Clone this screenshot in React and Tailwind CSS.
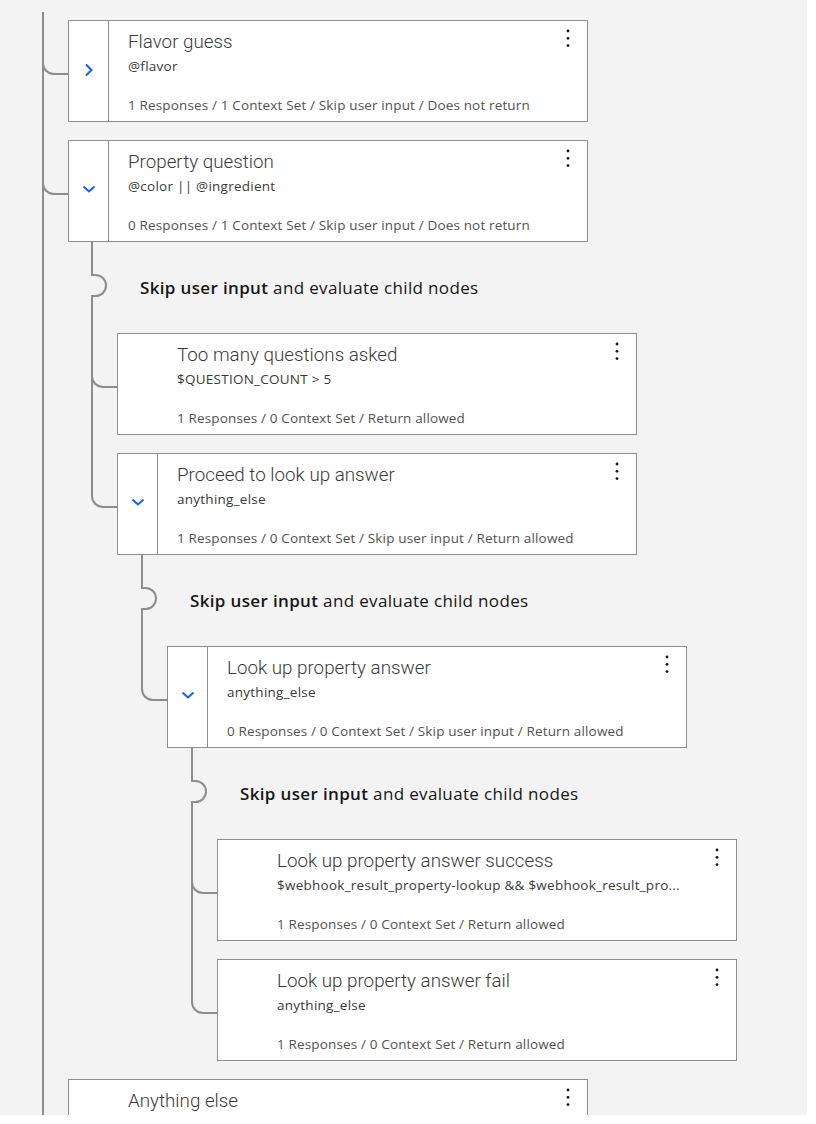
import React from 'react';

const tree = [
  {
    title: 'Flavor guess',
    cond: '@flavor',
    foot: '1 Responses / 1 Context Set / Skip user input / Does not return',
    chevron: 'right',
  },
  {
    title: 'Property question',
    cond: '@color || @ingredient',
    foot: '0 Responses / 1 Context Set / Skip user input / Does not return',
    chevron: 'down',
    children: [
      {
        title: 'Too many questions asked',
        cond: '$QUESTION_COUNT > 5',
        foot: '1 Responses / 0 Context Set / Return allowed',
      },
      {
        title: 'Proceed to look up answer',
        cond: 'anything_else',
        foot: '1 Responses / 0 Context Set / Skip user input / Return allowed',
        chevron: 'down',
        children: [
          {
            title: 'Look up property answer',
            cond: 'anything_else',
            foot: '0 Responses / 0 Context Set / Skip user input / Return allowed',
            chevron: 'down',
            children: [
              {
                title: 'Look up property answer success',
                cond: '$webhook_result_property-lookup && $webhook_result_pro...',
                foot: '1 Responses / 0 Context Set / Return allowed',
              },
              {
                title: 'Look up property answer fail',
                cond: 'anything_else',
                foot: '1 Responses / 0 Context Set / Return allowed',
              },
            ],
          },
        ],
      },
    ],
  },
  {
    title: 'Anything else',
    cond: '',
    foot: '',
  },
];

function Kebab() {
  return (
    <svg width="4" height="18" viewBox="0 0 4 18" fill="#161616">
      <circle cx="2" cy="2" r="1.4" />
      <circle cx="2" cy="9.3" r="1.4" />
      <circle cx="2" cy="16.6" r="1.4" />
    </svg>
  );
}

function ChevronRight() {
  return (
    <svg width="20" height="20" viewBox="0 0 20 20" className="mb-[2px]">
      <path d="M7 4.5 L12.5 10 L7 15.5" fill="none" stroke="#0f62fe" strokeWidth="2" />
    </svg>
  );
}

function ChevronDown() {
  return (
    <svg width="20" height="20" viewBox="0 0 20 20" className="mb-[4px]">
      <path d="M4.5 7.5 L10 12.5 L15.5 7.5" fill="none" stroke="#0f62fe" strokeWidth="2" />
    </svg>
  );
}

function Card({ node }) {
  return (
    <div className="w-[520px] h-[102px] bg-white border border-[#8d8d8d] flex">
      <div
        className={
          node.chevron
            ? 'w-[40px] shrink-0 flex items-center justify-center border-r border-[#8d8d8d]'
            : 'w-[40px] shrink-0'
        }
      >
        {node.chevron === 'right' && <ChevronRight />}
        {node.chevron === 'down' && <ChevronDown />}
      </div>
      <div className="flex-1 min-w-0 pl-[19px] pt-[9px] pb-[7px] flex flex-col">
        <div className="font-['Roboto',sans-serif] text-[18.8px] leading-[24px] font-light text-[#393939] whitespace-nowrap">
          {node.title}
        </div>
        <div className="mt-[3px] text-[13.5px] leading-[18px] tracking-[0.25px] text-[#393939] whitespace-nowrap">
          {node.cond}
        </div>
        <div className="mt-auto text-[13.5px] leading-[18px] tracking-[0.15px] text-[#525252] whitespace-nowrap">
          {node.foot}
        </div>
      </div>
      <div className="w-[38px] shrink-0 flex justify-center pt-[8px]">
        <Kebab />
      </div>
    </div>
  );
}

function Node({ node, depth, isLast }) {
  return (
    <div className="relative">
      {depth > 0 && !isLast && (
        <div className="absolute left-[-26px] top-0 bottom-[-18px] w-[2px] bg-[#8d8d8d]" />
      )}
      <div className="absolute left-[-26px] top-0 h-[55px] w-[26px] border-l-2 border-b-2 border-[#8d8d8d] rounded-bl-[12px]" />
      <Card node={node} />
      {node.children && <Group nodes={node.children} depth={depth + 1} />}
    </div>
  );
}

function Group({ nodes, depth }) {
  return (
    <div className={depth === 1 ? 'ml-[49px]' : 'ml-[50px]'}>
      <div className="relative h-[91px] pl-[23px] pt-[36px] text-[17px] leading-[20px] tracking-[0.35px] text-[#161616] whitespace-nowrap">
        <svg className="absolute left-[-26px] top-0" width="20" height="91" viewBox="0 0 20 91">
          <path
            d="M1 0 V33 H4.5 A10.5 10.5 0 0 1 4.5 54 H1 V91"
            fill="none"
            stroke="#8d8d8d"
            strokeWidth="2"
          />
        </svg>
        <span className="font-semibold">Skip user input</span> and evaluate child nodes
      </div>
      <div className="flex flex-col gap-[18px]">
        {nodes.map((n, i) => (
          <Node key={n.title} node={n} depth={depth} isLast={i === nodes.length - 1} />
        ))}
      </div>
    </div>
  );
}

export default function App() {
  return (
    <div className="w-[807px] h-[1115px] bg-[#f3f3f3] overflow-hidden relative font-['Open_Sans',sans-serif]">
      <div className="absolute left-[42px] top-[12px] bottom-0 w-[2px] bg-[#8d8d8d]" />
      <div className="pl-[68px] pt-[20px] flex flex-col gap-[18px]">
        {tree.map((n, i) => (
          <Node key={n.title} node={n} depth={0} isLast={i === tree.length - 1} />
        ))}
      </div>
    </div>
  );
}
